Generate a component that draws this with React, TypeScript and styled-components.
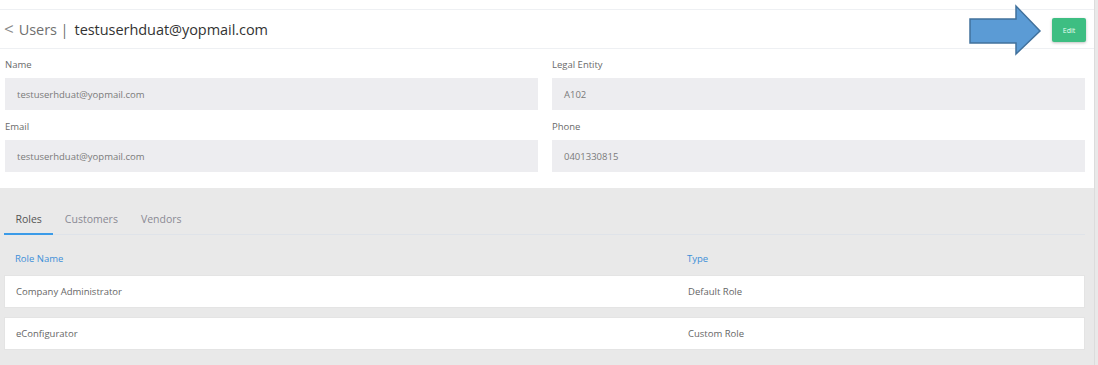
import * as React from 'react';
import styled, { createGlobalStyle } from 'styled-components';

const GlobalStyle = createGlobalStyle`
  html, body {
    margin: 0;
    padding: 0;
    background: #e9e9e9;
  }
  body {
    font-family: 'Open Sans', 'Noto Sans', sans-serif;
    color: #555;
  }
`;

const Page = styled.div`
  position: relative;
  width: 1095px;
  height: 365px;
  background: #fff;
  border-right: 1px solid #dcdcdc;
  box-sizing: border-box;
  display: flex;
  flex-direction: column;
  overflow: hidden;
`;

const Header = styled.header`
  margin-top: 9px;
  height: 38px;
  border-top: 1px solid #eef0f3;
  border-bottom: 1px solid #eef0f3;
  display: flex;
  align-items: center;
  justify-content: space-between;
  padding: 0 8px 0 4px;
`;

const Title = styled.div`
  display: flex;
  align-items: center;
  font-size: 14.5px;
  letter-spacing: -0.05px;
`;

const Back = styled.span`
  color: #8a8a8a;
  font-size: 17px;
  line-height: 1;
  margin-right: 5px;
  margin-top: -1px;
`;

const Crumb = styled.span`
  color: #707070;
  margin-right: 6px;
`;

const Current = styled.span`
  color: #333;
`;

const EditButton = styled.button`
  width: 34px;
  height: 24px;
  border: none;
  border-radius: 2px;
  background: #3dbe82;
  color: #eafff3;
  font-family: inherit;
  font-size: 7px;
  box-shadow: 0 1px 3px rgba(0, 0, 0, 0.25);
  padding: 0;
  margin-top: 2px;
`;

const Fields = styled.div`
  display: grid;
  grid-template-columns: 1fr 1fr;
  column-gap: 14px;
  row-gap: 9px;
  padding: 8px 9px 16px 5px;
`;

const Field = styled.div`
  display: flex;
  flex-direction: column;
`;

const Label = styled.label`
  height: 16px;
  line-height: 16px;
  font-size: 9.5px;
  color: #6a6a6a;
  margin-bottom: 5px;
`;

const Value = styled.div`
  height: 32px;
  background: #ededf0;
  display: flex;
  align-items: center;
  padding-left: 12px;
  font-size: 9.5px;
  color: #7a7a7a;
`;

const Section = styled.section`
  flex: 1;
  background: #e9e9e9;
  padding: 17px 9px 0 4px;
`;

const Tabs = styled.div`
  display: flex;
  border-bottom: 1px solid #dfe3e9;
`;

const Tab = styled.div<{ $active?: boolean }>`
  height: 28px;
  padding: 0 11.5px;
  display: flex;
  align-items: center;
  font-size: 10.5px;
  color: ${(p) => (p.$active ? '#555' : '#8a8a94')};
  border-bottom: 2px solid ${(p) => (p.$active ? '#3b9be8' : 'transparent')};
  margin-bottom: -1px;
`;

const TableRow = styled.div<{ $head?: boolean }>`
  display: grid;
  grid-template-columns: 672px 1fr;
  align-items: center;
  padding: 0 11px;
  font-size: 9.5px;
  height: ${(p) => (p.$head ? '40px' : '33px')};
  color: ${(p) => (p.$head ? '#3d8fd8' : '#666')};
  background: ${(p) => (p.$head ? 'transparent' : '#fff')};
  margin-bottom: ${(p) => (p.$head ? '0' : '9px')};
  box-sizing: border-box;
  ${(p) => (p.$head ? 'padding-top: 6px;' : 'border: 1px solid #e4e4e4;')}
`;

const Annotation = styled.svg`
  position: absolute;
  left: 966px;
  top: 4px;
`;

const fields = [
  { label: 'Name', value: 'testuserhduat@yopmail.com' },
  { label: 'Legal Entity', value: 'A102' },
  { label: 'Email', value: 'testuserhduat@yopmail.com' },
  { label: 'Phone', value: '0401330815' },
];

const roles = [
  { name: 'Company Administrator', type: 'Default Role' },
  { name: 'eConfigurator', type: 'Custom Role' },
];

export default function App() {
  return (
    <>
      <GlobalStyle />
      <Page>
        <Header>
          <Title>
            <Back>&lt;</Back>
            <Crumb>Users |</Crumb>
            <Current>testuserhduat@yopmail.com</Current>
          </Title>
          <EditButton>Edit</EditButton>
        </Header>
        <Fields>
          {fields.map((f) => (
            <Field key={f.label}>
              <Label>{f.label}</Label>
              <Value>{f.value}</Value>
            </Field>
          ))}
        </Fields>
        <Section>
          <Tabs>
            <Tab $active>Roles</Tab>
            <Tab>Customers</Tab>
            <Tab>Vendors</Tab>
          </Tabs>
          <TableRow $head>
            <span>Role Name</span>
            <span>Type</span>
          </TableRow>
          {roles.map((r) => (
            <TableRow key={r.name}>
              <span>{r.name}</span>
              <span>{r.type}</span>
            </TableRow>
          ))}
        </Section>
        <Annotation width="78" height="52" viewBox="0 0 78 52">
          <path
            d="M4 15 H50 V2 L74 27 L50 50 V39 H4 Z"
            fill="#5b9bd5"
            stroke="#41719c"
            strokeWidth="1.5"
            strokeLinejoin="miter"
          />
        </Annotation>
      </Page>
    </>
  );
}
